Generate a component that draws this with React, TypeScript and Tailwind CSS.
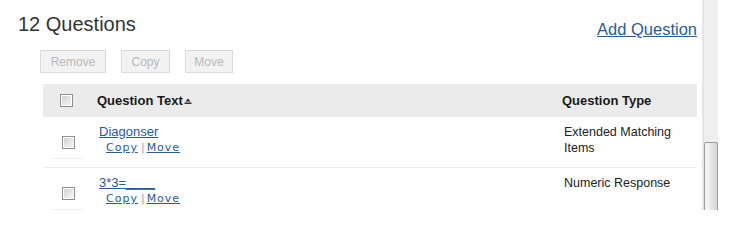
import React from "react";

type Question = {
  id: number;
  text: string;
  type: string[];
};

const questions: Question[] = [
  { id: 1, text: "Diagonser", type: ["Extended Matching", "Items"] },
  { id: 2, text: "3*3=____", type: ["Numeric Response"] },
];

function Checkbox() {
  return (
    <div className="w-[13px] h-[13px] border border-[#8e8e8e] bg-white p-px">
      <div className="w-full h-full bg-gradient-to-br from-[#d4d4d4] to-[#f4f4f4]" />
    </div>
  );
}

function SortIcon() {
  return (
    <svg width="8" height="8" viewBox="0 0 8 8" className="ml-px">
      <path d="M4 1.5 L6.5 4.5 L1.5 4.5 Z" fill="#222" />
      <rect x="0.5" y="5.5" width="7" height="1.4" fill="#222" />
    </svg>
  );
}

function ActionButton({ label, width }: { label: string; width: string }) {
  return (
    <button
      disabled
      className={`h-[23px] ${width} border border-[#dadada] bg-[#f2f2f2] text-[12px] text-[#b9b9b9] leading-none`}
    >
      {label}
    </button>
  );
}

function QuestionRow({ q }: { q: Question }) {
  return (
    <div className="grid grid-cols-[54px_1fr_135px] h-[51px] border-b border-[#ededed]">
      <div className="flex flex-col pt-[19px]">
        <div className="pl-[19px]">
          <Checkbox />
        </div>
        <div className="mt-[9px] ml-[7px] w-[33px] border-b border-[#efefef]" />
      </div>
      <div className="pt-[7px] pl-[2px]">
        <a href="#" className="block text-[13px] leading-[16px] text-[#2b5a98] underline">
          {q.text}
        </a>
        <div className="pl-[7px] mt-[1px] flex items-center text-[11px] leading-[14px] font-['DejaVu_Sans',sans-serif]">
          <a href="#" className="text-[#2b5a98] underline tracking-[1px]">Copy</a>
          <span className="ml-[3px] mr-[2px] text-[#a0a0a0]">|</span>
          <a href="#" className="text-[#2b5a98] underline tracking-[1px]">Move</a>
        </div>
      </div>
      <div className="pt-[7px] pl-[2px] text-[12.5px] leading-[16px] text-[#222]">
        {q.type.map((line) => (
          <div key={line}>{line}</div>
        ))}
      </div>
    </div>
  );
}

export default function App() {
  return (
    <div className="w-[732px] h-[210px] overflow-hidden bg-white flex font-['Liberation_Sans',Arial,sans-serif]">
      <div className="w-[702px] pl-[18px] pr-[5px]">
        <div className="flex justify-between items-start h-[36px] pt-[12px]">
          <h1 className="text-[20px] leading-[24px] text-[#333]">12 Questions</h1>
          <a href="#" className="mt-[7px] text-[16.5px] leading-[20px] text-[#2b5a98] underline">
            Add Question
          </a>
        </div>

        <div className="flex gap-[15px] ml-[22px] mt-[14px]">
          <ActionButton label="Remove" width="w-[66px]" />
          <ActionButton label="Copy" width="w-[49px]" />
          <ActionButton label="Move" width="w-[48px]" />
        </div>

        <div className="ml-[25px] mt-[11px]">
          <div className="grid grid-cols-[54px_1fr_135px] h-[33px] items-center bg-[#ebebeb] text-[13px] font-bold text-[#1a1a1a]">
            <div className="pl-[17px]">
              <Checkbox />
            </div>
            <div className="flex items-center">
              Question Text
              <SortIcon />
            </div>
            <div>Question Type</div>
          </div>
          {questions.map((q) => (
            <QuestionRow key={q.id} q={q} />
          ))}
        </div>
      </div>

      {/* scrollbar */}
      <div className="w-[16px] h-full flex flex-col bg-[#efefef] border-l-2 border-[#e4e4e4]">
        <div className="h-[142px]" />
        <div className="flex-1 border border-[#9c9c9c] border-b-0 rounded-t-[2px] bg-gradient-to-r from-[#f8f8f8] to-[#d6d6d6]" />
      </div>
    </div>
  );
}
